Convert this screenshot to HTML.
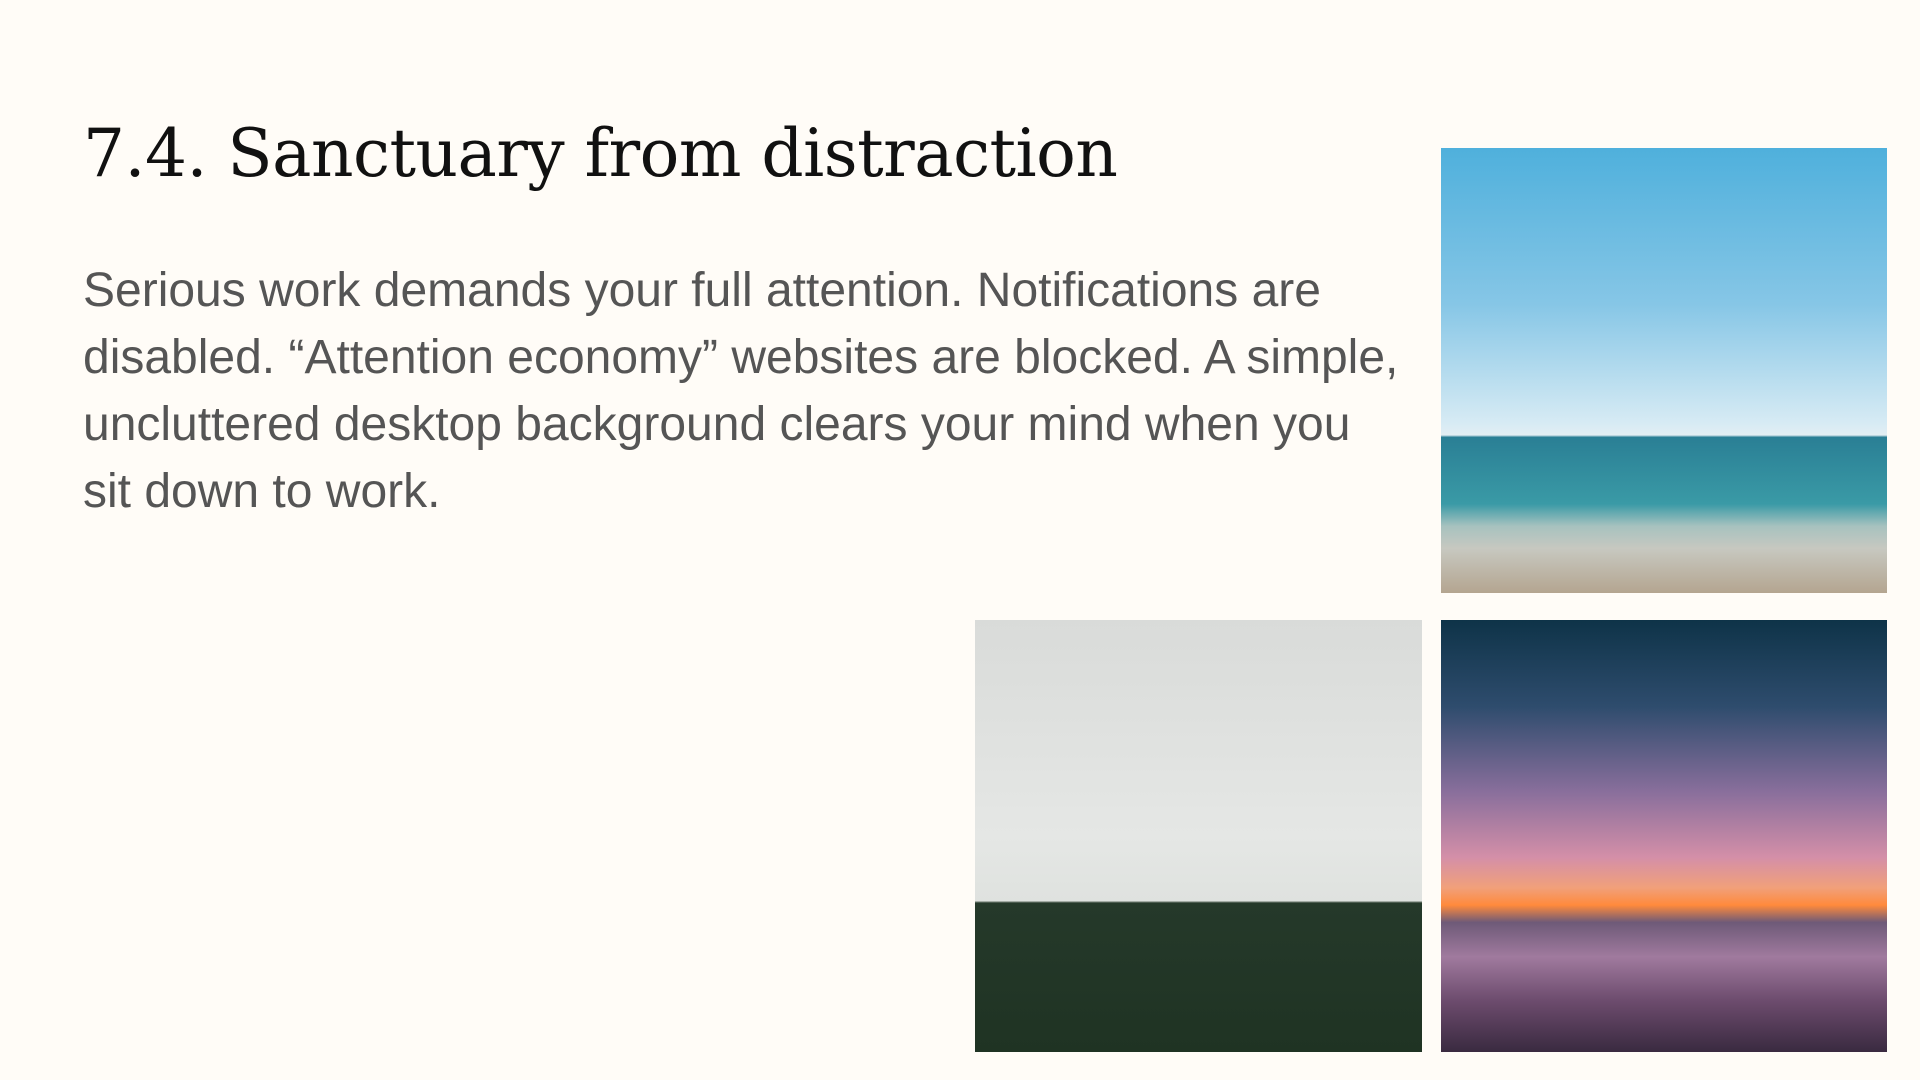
<!DOCTYPE html>
<html><head><meta charset="utf-8"><style>
html,body{margin:0;padding:0;width:1920px;height:1080px;background:#fffcf7;overflow:hidden;position:relative}
h1{position:absolute;left:83px;top:115px;margin:0;font-family:"DejaVu Serif","Liberation Serif",serif;font-weight:normal;font-size:66px;color:#111;letter-spacing:-0.5px;white-space:nowrap}
p{position:absolute;left:83px;top:257px;margin:0;width:1321px;font-family:"Liberation Sans",sans-serif;font-size:48px;line-height:67px;color:#555}
.img{position:absolute}
#sea{left:1441px;top:148px;width:446px;height:445px;background:linear-gradient(to bottom,#4fb0dc 0%,#86c6e6 35%,#d7ebf4 62%,#e3eef3 64.5%,#2a7f95 65%,#3a9aa6 80%,#a7c2bf 85%,#c7c8c0 90%,#b4a590 100%)}
#field{left:975px;top:620px;width:447px;height:432px;background:linear-gradient(to bottom,#d9dbd9 0%,#e5e7e5 50%,#dfe2df 65%,#25392a 65.5%,#1f3323 100%)}
#sky{left:1441px;top:620px;width:446px;height:432px;background:linear-gradient(to bottom,#0e3348 0%,#2e4c6d 20%,#8a6f9c 40%,#d48fa8 55%,#f1a07a 62%,#ff8a3c 66%,#6e5a78 70%,#a07a9e 78%,#6d4c6e 88%,#3a2a40 100%)}
</style></head><body>
<h1>7.4. Sanctuary from distraction</h1>
<p>Serious work demands your full attention. Notifications are disabled. “Attention economy” websites are blocked. A simple, uncluttered desktop background clears your mind when you sit down to work.</p>
<div class="img" id="sea"></div>
<div class="img" id="field"></div>
<div class="img" id="sky"></div>
</body></html>
